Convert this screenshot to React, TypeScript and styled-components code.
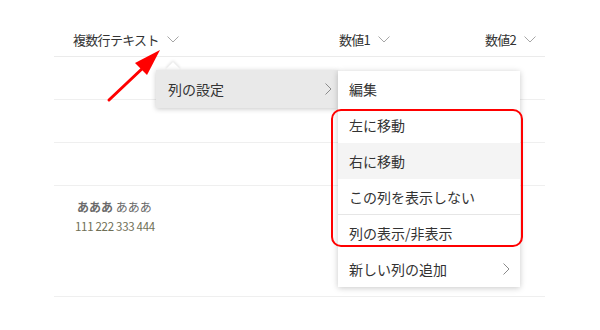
import styled, { createGlobalStyle } from "styled-components";

const GlobalStyle = createGlobalStyle`
    body {
        margin: 0;
        background: #ffffff;
        font-family: "Noto Sans CJK JP", "Noto Sans", sans-serif;
        color: #333333;
    }
`;

const columns = ["複数行テキスト", "数値1", "数値2"];

const subItems = [
    { label: "編集" },
    { label: "左に移動" },
    { label: "右に移動", hovered: true },
    { label: "この列を表示しない", divider: true },
    { label: "列の表示/非表示" },
    { label: "新しい列の追加", more: true },
];

const Chevron = ({ dir = "down" }: { dir?: "down" | "right" }) =>
    dir === "down" ? (
        <svg width="12" height="7" viewBox="0 0 12 7">
            <path d="M0.5 0.5 L6 6 L11.5 0.5" fill="none" stroke="#a6a6a6" strokeWidth="1" />
        </svg>
    ) : (
        <svg width="7" height="12" viewBox="0 0 7 12">
            <path d="M0.5 0.5 L6 6 L0.5 11.5" fill="none" stroke="#8a8a8a" strokeWidth="1" />
        </svg>
    );

const App = () => {
    return <Page>
        <GlobalStyle />
        <Table>
            <HeaderRow>
                {columns.map((c) => (
                    <HeaderCell key={c}>
                        <HeaderText>{c}</HeaderText>
                        <Chevron />
                    </HeaderCell>
                ))}
            </HeaderRow>
            <Row />
            <Row />
            <Row />
            <Row tall>
                <Cell>
                    <Names><b>あああ</b> あああ</Names>
                    <Numbers>111 222 333 444</Numbers>
                </Cell>
            </Row>
        </Table>

        {/* context menu */}
        <Beak />
        <MainMenu>
            <MenuItem hovered>
                列の設定
                <Chevron dir="right" />
            </MenuItem>
        </MainMenu>

        <SubMenu>
            {subItems.map((item) => (
                <SubItem key={item.label} hovered={item.hovered} divider={item.divider}>
                    {item.label}
                    {item.more && <Chevron dir="right" />}
                </SubItem>
            ))}
        </SubMenu>

        <Highlight />

        <Arrow width="600" height="330" viewBox="0 0 600 330">
            <line x1="109" y1="100" x2="145" y2="66" stroke="#ff0000" strokeWidth="3" strokeLinecap="round" />
            <polygon points="160,50 135,63 147,75" fill="#ff0000" />
        </Arrow>
    </Page>
}

const Page = styled.div`
    position: relative;
    width: 600px;
    height: 330px;
    overflow: hidden;
`;

const Table = styled.div`
    width: 491px;
    margin-left: 54px;
    padding-top: 22px;
`;

const HeaderRow = styled.div`
    display: grid;
    grid-template-columns: 266px 146px 1fr;
    align-items: center;
    height: 34px;
    padding-left: 19px;
    border-bottom: 1px solid #ebebeb;
`;

const HeaderCell = styled.div`
    display: flex;
    align-items: center;
    gap: 8px;
`;

const HeaderText = styled.span`
    font-size: 13px;
    letter-spacing: -0.7px;
    color: #333333;
`;

const Row = styled.div<{ tall?: boolean }>`
    height: ${({ tall }) => (tall ? "110px" : "42px")};
    border-bottom: 1px solid #efefef;
`;

const Cell = styled.div`
    padding: 12px 0 0 23px;
`;

const Names = styled.div`
    font-size: 12px;
    color: #6a6a6a;
    b {
        font-weight: 700;
    }
`;

const Numbers = styled.div`
    margin-top: 3px;
    margin-left: -2px;
    font-size: 11.5px;
    color: #6f6f56;
    letter-spacing: -0.3px;
`;

const Beak = styled.div`
    position: absolute;
    left: 168px;
    top: 64px;
    width: 10px;
    height: 10px;
    background: #ffffff;
    transform: rotate(45deg);
    box-shadow: -1px -1px 3px rgba(0, 0, 0, 0.12);
`;

const MainMenu = styled.div`
    position: absolute;
    left: 156px;
    top: 70px;
    width: 182px;
    background: #ffffff;
    box-shadow: 0 1px 5px rgba(0, 0, 0, 0.22);
`;

const MenuItem = styled.div<{ hovered?: boolean }>`
    display: flex;
    align-items: center;
    justify-content: space-between;
    height: 38px;
    padding: 0 6px 0 12px;
    font-size: 14px;
    color: #333333;
    background: ${({ hovered }) => (hovered ? "#e9e9e9" : "#ffffff")};
`;

const SubMenu = styled.div`
    position: absolute;
    left: 338px;
    top: 71px;
    width: 182px;
    background: #ffffff;
    box-shadow: 0 1px 6px rgba(0, 0, 0, 0.22);
`;

const SubItem = styled.div<{ hovered?: boolean; divider?: boolean }>`
    display: flex;
    align-items: center;
    justify-content: space-between;
    box-sizing: border-box;
    height: 36px;
    padding: 0 10px 0 11px;
    font-size: 14px;
    color: #333333;
    background: ${({ hovered }) => (hovered ? "#f4f4f4" : "#ffffff")};
    border-bottom: ${({ divider }) => (divider ? "1px solid #e6e6e6" : "none")};
`;

const Highlight = styled.div`
    position: absolute;
    left: 331px;
    top: 109px;
    width: 188px;
    height: 134px;
    border: 2px solid #ff0000;
    border-radius: 10px;
`;

const Arrow = styled.svg`
    position: absolute;
    left: 0;
    top: 0;
    pointer-events: none;
`;

export default App;
